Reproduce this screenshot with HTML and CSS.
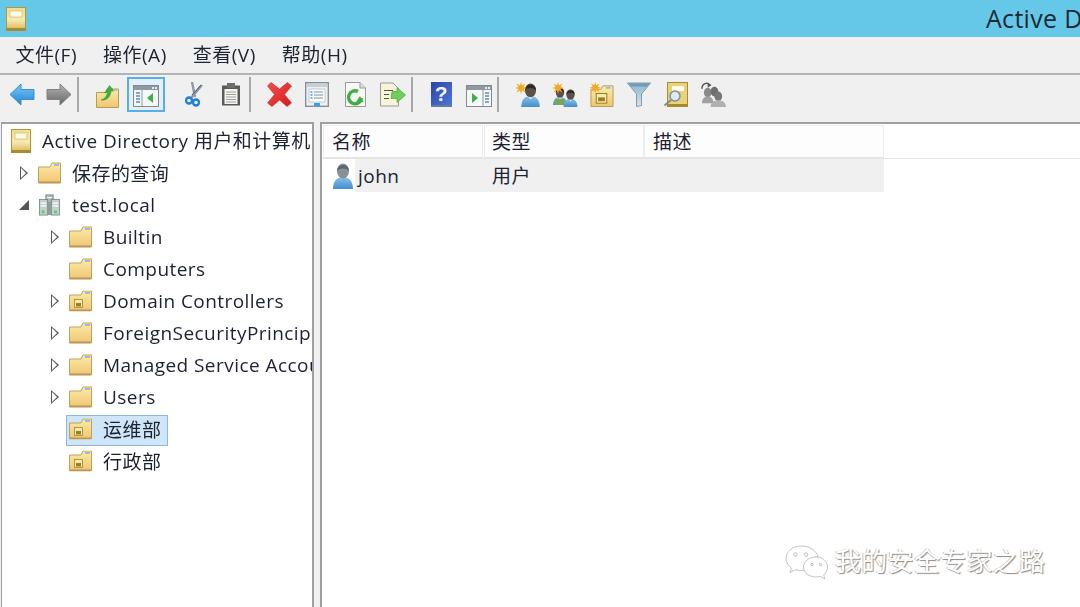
FILE: index.html
```html
<!DOCTYPE html>
<html lang="zh-CN">
<head>
<meta charset="utf-8">
<title>Active Directory 用户和计算机</title>
<link rel="stylesheet" href="styles.css">
</head>
<body>
<svg class="defs" width="0" height="0" aria-hidden="true">
  <defs>
    <linearGradient id="gFolder" x1="0" y1="0" x2="0" y2="1"><stop offset="0" stop-color="#fcebaa"/><stop offset="1" stop-color="#efc670"/></linearGradient>
    <linearGradient id="gBook" x1="0" y1="0" x2="0" y2="1"><stop offset="0" stop-color="#f0dd92"/><stop offset=".55" stop-color="#f6eab0"/><stop offset="1" stop-color="#d8b455"/></linearGradient>
    <linearGradient id="gBlue" x1="0" y1="0" x2="0" y2="1"><stop offset="0" stop-color="#7cc8f5"/><stop offset="1" stop-color="#1f86d6"/></linearGradient>
    <linearGradient id="gGray" x1="0" y1="0" x2="0" y2="1"><stop offset="0" stop-color="#b4b4b4"/><stop offset="1" stop-color="#666"/></linearGradient>
    <linearGradient id="gRed" x1="0" y1="0" x2="1" y2="1"><stop offset="0" stop-color="#f25050"/><stop offset="1" stop-color="#d81818"/></linearGradient>
    <linearGradient id="gHelp" x1="0" y1="0" x2="1" y2="1"><stop offset="0" stop-color="#2a45a5"/><stop offset="1" stop-color="#4e78dc"/></linearGradient>
    <linearGradient id="gFunnel" x1="0" y1="0" x2="0" y2="1"><stop offset="0" stop-color="#8fb4cc"/><stop offset="1" stop-color="#d4e4ee"/></linearGradient>
    <linearGradient id="gBody" x1="0" y1="0" x2="0" y2="1"><stop offset="0" stop-color="#8cc0e6"/><stop offset="1" stop-color="#3f8fd2"/></linearGradient>

    <symbol id="book" viewBox="0 0 20 24"><rect x=".5" y=".5" width="19" height="23" fill="url(#gBook)" stroke="#b4953c"/><rect x="0" y="21" width="20" height="3" fill="#a98a2e"/><rect x="4" y="4" width="12" height="6" fill="#fffbe6" stroke="#c9ae5a" stroke-width=".6"/></symbol>

    <symbol id="folder" viewBox="0 0 23 21"><path d="M.5 4.500H12L14 .5H22.500V20.500H.5Z" fill="url(#gFolder)" stroke="#c0a25e"/><rect x="16" y="1.500" width="5" height="2" fill="#8fc0e0"/><rect x="1" y="19" width="21" height="1.600" fill="#b8985a"/></symbol>

    <symbol id="folderou" viewBox="0 0 23 21"><use href="#folder" width="23" height="21"/><rect x="5.500" y="9" width="8" height="8" fill="#f6e9b2" stroke="#a5862a" stroke-width=".8"/><rect x="7" y="12.500" width="5" height="3.500" fill="#9a7c22"/></symbol>

    <symbol id="server" viewBox="0 0 24 24"><rect x="8" y="1" width="8" height="8" fill="#aab8b8" stroke="#707c7c" stroke-width=".8"/><rect x="1" y="6" width="9" height="17" fill="#c4d0d0" stroke="#6c7a7a" stroke-width=".8"/><rect x="14" y="6" width="9" height="17" fill="#c4d0d0" stroke="#6c7a7a" stroke-width=".8"/><path d="M10 9h4v14h-4z" fill="#8f9c9c"/><path d="M2.500 10h6M2.500 13h6M15.500 10h6M15.500 13h6M9.500 4h5" stroke="#fff" stroke-width="1.200"/><rect x="3.500" y="18" width="3" height="3" fill="#58d838"/><rect x="17" y="18" width="3" height="3" fill="#58d838"/></symbol>

    <symbol id="arrowl" viewBox="0 0 26 24"><path d="M1 12 12 1.500V7H25V17H12V22.500Z" fill="url(#gBlue)" stroke="#3a8fd0"/></symbol>
    <symbol id="arrowr" viewBox="0 0 26 24"><path d="M25 12 14 1.500V7H1V17H14V22.500Z" fill="url(#gGray)" stroke="#808080"/></symbol>

    <symbol id="up" viewBox="0 0 23 23"><path d="M.5 7.500H10L11 4H22.500V22.500H.5Z" fill="url(#gFolder)" stroke="#b79a5c"/><path d="M5 15C9 14 11 11 11.500 7L8.500 8 13.500 .5 18 6 15 6C15 11 11 16 5 15Z" fill="#3fae3c" stroke="#2f8f2d" stroke-width=".5"/><rect x="17" y="4.500" width="4" height="1.500" fill="#8fc0e0"/></symbol>

    <symbol id="tree" viewBox="0 0 26 22"><rect x=".5" y=".5" width="25" height="21" fill="#f5f7f8" stroke="#7f8a93"/><rect x="1" y="1" width="24" height="4" fill="#8f99a2"/><rect x="19" y="2" width="2" height="2" fill="#e8ecef"/><rect x="22" y="2" width="2" height="2" fill="#e8ecef"/><path d="M9 5V21" stroke="#8f99a2"/><path d="M3 8h4M3 11h4M3 14h4M3 17h4" stroke="#5a8fc0" stroke-width="1.500"/><path d="M20 8V18L14 13Z" fill="#3cb043"/></symbol>

    <symbol id="scissors" viewBox="0 0 18 25"><path d="M7 0 10 15M17 3 6 16" stroke="#8d99a6" stroke-width="2.400" fill="none"/><path d="M16 3 7 13" stroke="#4a5562" stroke-width="1"/><circle cx="4" cy="18.500" r="3" fill="none" stroke="#1f7fd8" stroke-width="2.400"/><circle cx="11" cy="20.500" r="3" fill="none" stroke="#1f7fd8" stroke-width="2.400"/></symbol>

    <symbol id="clip" viewBox="0 0 20 23"><rect x="1" y="2.500" width="18" height="20" fill="#5a5a5a"/><rect x="3.500" y="6" width="13" height="15" fill="#f4f4f0"/><path d="M5 9h10M5 11.500h10M5 14h10M5 16.500h10M5 19h10" stroke="#a0a0a0"/><rect x="6" y="0" width="8" height="5" fill="#6c6c6c"/></symbol>

    <symbol id="del" viewBox="0 0 25 25"><path d="M4 .5 12.500 7 20.500 .5 24.500 4 17.500 12.500 24.500 21 20 24.500 12.500 18 5 24.500 .5 21 7.500 12.500 .5 4Z" fill="url(#gRed)" stroke="#c43838" stroke-width=".7"/></symbol>

    <symbol id="props" viewBox="0 0 24 25"><rect x=".7" y=".7" width="22.600" height="23.600" fill="#eef2f4" stroke="#858f96" stroke-width="1.400"/><rect x="2" y="2" width="20" height="3" fill="#c8d0d6"/><rect x="4" y="7" width="16" height="13" fill="#fff" stroke="#aeb6bc" stroke-width=".7"/><path d="M9 10h9M9 13h9M9 16h9" stroke="#7f8a93"/><path d="M5.500 10h2M5.500 13h2M5.500 16h2" stroke="#39a0e8" stroke-width="1.300"/><rect x="9" y="21" width="6" height="3" fill="#39a0e8"/></symbol>

    <symbol id="refresh" viewBox="0 0 21 25"><path d="M.5.5H15L20.500 6V24.500H.5Z" fill="#f8f8f4" stroke="#9a9a9a"/><path d="M15 .5V6H20.500" fill="#ddd" stroke="#9a9a9a"/><path d="M16.500 16A6.500 6.500 0 1 1 13 9.500" fill="none" stroke="#3cb043" stroke-width="3.400"/><path d="M11 20 18.500 20 15 14Z" fill="#3cb043"/></symbol>

    <symbol id="export" viewBox="0 0 26 24"><path d="M.5.5H13L18.500 6V23.500H.5Z" fill="#f8f4d8" stroke="#9a9a9a"/><path d="M4 8h9M4 12h5M4 16h5" stroke="#555" stroke-width="1.200"/><path d="M12 9H17V5L25.500 12.500 17 20V16H11Z" fill="#6fcf5a" stroke="#4fa83e" stroke-width=".7"/></symbol>

    <symbol id="help" viewBox="0 0 21 25"><rect width="21" height="25" fill="url(#gHelp)"/><rect y="23" width="21" height="2" fill="#6b7a96"/><text x="10.500" y="19" font-family="'Liberation Sans',sans-serif" font-size="21" font-weight="700" fill="#f0f4ff" text-anchor="middle">?</text></symbol>

    <symbol id="pane" viewBox="0 0 26 22"><rect x=".5" y=".5" width="25" height="21" fill="#f5f7f8" stroke="#7f8a93"/><rect x="1" y="1" width="24" height="4" fill="#8f99a2"/><rect x="19" y="2" width="2" height="2" fill="#e8ecef"/><rect x="22" y="2" width="2" height="2" fill="#e8ecef"/><path d="M17 5V21" stroke="#8f99a2"/><path d="M19 8h4M19 11h4M19 14h4M19 17h4" stroke="#5a8fc0" stroke-width="1.500"/><path d="M6 8V18L12 13Z" fill="#3cb043"/></symbol>

    <g id="star"><path d="M6 0 7 3.500 10.500 1.500 8.500 5 12 6 8.500 7 10.500 10.500 7 8.500 6 12 5 8.500 1.500 10.500 3.500 7 0 6 3.500 5 1.500 1.500 5 3.500Z" fill="#f6a821"/></g>

    <symbol id="person" viewBox="0 0 20 26"><path d="M0 26C0 18 4 14 10 14S20 18 20 26Z" fill="url(#gBody)"/><path d="M7 14.500 10 18 13 14.500Z" fill="#d6e8f5"/><ellipse cx="10" cy="8" rx="6" ry="7.500" fill="#5c5148"/><path d="M4 8C4 0 16 0 16 8 13 4.500 7 4.500 4 8Z" fill="#2e2823"/></symbol>

    <symbol id="personb" viewBox="0 0 20 26"><path d="M0 26C0 18 4 14 10 14S20 18 20 26Z" fill="url(#gBody)"/><ellipse cx="10" cy="8" rx="6" ry="7.500" fill="#8a9096"/><path d="M4 8C4 0 16 0 16 8 13 4.500 7 4.500 4 8Z" fill="#5a6873"/></symbol>

    <symbol id="newuser" viewBox="0 0 25 25"><use href="#person" x="6" y="1" width="19" height="24"/><use href="#star"/></symbol>

    <symbol id="newgroup" viewBox="0 0 26 25"><use href="#person" x="1" y="5" width="14" height="18"/><rect x="3" y="17" width="10" height="6" fill="#7aa850"/><use href="#person" x="11" y="7" width="15" height="18"/><use href="#star"/></symbol>

    <symbol id="newou" viewBox="0 0 25 26"><path d="M1.500 7.500H12L14 4H24.500V25.500H1.500Z" fill="url(#gFolder)" stroke="#b79a5c"/><rect x="17" y="5" width="5" height="2" fill="#8fc0e0"/><rect x="7" y="12" width="11" height="10" fill="#f6e9b2" stroke="#97781f"/><rect x="9" y="16" width="7" height="4" fill="#9a7c22"/><use href="#star"/></symbol>

    <symbol id="filter" viewBox="0 0 24 25"><path d="M.5 1H23.500L14.500 12V23.500L9.500 24.500V12Z" fill="url(#gFunnel)" stroke="#7f9cb0"/><path d="M1.500 1.500H22.500L20 4.500H4Z" fill="#6f9cb8"/></symbol>

    <symbol id="find" viewBox="0 0 25 25"><rect x="4.500" y=".5" width="20" height="24" fill="#e8d27a" stroke="#a88c2c"/><rect x="5" y="22" width="19" height="2.500" fill="#a88c2c"/><rect x="9" y="4" width="12" height="5" fill="#fffbe6"/><circle cx="12" cy="14" r="5" fill="#dbeaf3" stroke="#7f8f98" stroke-width="1.500"/><path d="M8 18 1.500 23.500" stroke="#8a8a8a" stroke-width="2.200"/></symbol>

    <symbol id="delegate" viewBox="0 0 27 26"><path d="M2 7C2 1 8 0 10 3" fill="none" stroke="#555" stroke-width="1.500"/><path d="M8 1 12 3 8 6Z" fill="#555"/><ellipse cx="8" cy="11" rx="4" ry="5" fill="#8a8a8a"/><path d="M2 22C2 17 5 15 8 15S14 17 14 22Z" fill="#a0a0a0"/><ellipse cx="15" cy="10" rx="4" ry="5" fill="#6e6e6e"/><ellipse cx="19" cy="15" rx="4" ry="5" fill="#777"/><path d="M11 26C11 21 15 19 19 19S27 21 27 26Z" fill="#b0b0b0"/></symbol>

    <symbol id="wechat" viewBox="0 0 43 35"><path d="M16 1C7.500 1 1 6.500 1 13.500 1 17.500 3.500 21 6.500 23L5 27.500 10.500 24.700C12 25.200 14 25.500 16 25.500 17 25.500 18 25.400 19 25.200 18.200 19 25 12 33 12 31.500 5.500 24.500 1 16 1Z" fill="#fff" stroke="#c4c4c4"/><path d="M31 12C24 12 18.500 16.500 18.500 22 18.500 27.500 24 32 31 32 32.500 32 34 31.800 35.200 31.400L40 34 38.700 30C40.800 28.200 42.500 25.300 42.500 22 42.500 16.500 38 12 31 12Z" fill="#fff" stroke="#c4c4c4"/><circle cx="10.500" cy="9.500" r="1.700" fill="none" stroke="#bbb"/><circle cx="21" cy="9.500" r="1.700" fill="none" stroke="#bbb"/><circle cx="27" cy="19.500" r="1.200" fill="none" stroke="#bbb"/><circle cx="35.500" cy="19.500" r="1.200" fill="none" stroke="#bbb"/></symbol>
  </defs>
</svg>

<div class="app">
  <header class="titlebar">
    <svg class="title-icon"><use href="#book"/></svg>
    <span class="title-text">Active Directory 用户和计算机</span>
  </header>

  <nav class="menubar">
    <span class="menu-item">文件(F)</span>
    <span class="menu-item">操作(A)</span>
    <span class="menu-item">查看(V)</span>
    <span class="menu-item">帮助(H)</span>
  </nav>

  <div class="toolbar">
    <span class="tool"><svg class="i26"><use href="#arrowl"/></svg></span>
    <span class="tool"><svg class="i26"><use href="#arrowr"/></svg></span>
    <span class="sep"></span>
    <span class="tool ml-10"><svg class="i23"><use href="#up"/></svg></span>
    <span class="tool active"><svg class="i26s"><use href="#tree"/></svg></span>
    <span class="tool ml-10"><svg class="i18"><use href="#scissors"/></svg></span>
    <span class="tool"><svg class="i20"><use href="#clip"/></svg></span>
    <span class="sep"></span>
    <span class="tool ml-10"><svg class="i25"><use href="#del"/></svg></span>
    <span class="tool"><svg class="i24"><use href="#props"/></svg></span>
    <span class="tool ml-2"><svg class="i21"><use href="#refresh"/></svg></span>
    <span class="tool"><svg class="i26"><use href="#export"/></svg></span>
    <span class="sep"></span>
    <span class="tool ml-10"><svg class="i21"><use href="#help"/></svg></span>
    <span class="tool"><svg class="i26s"><use href="#pane"/></svg></span>
    <span class="sep"></span>
    <span class="tool ml-10"><svg class="i25"><use href="#newuser"/></svg></span>
    <span class="tool"><svg class="i26"><use href="#newgroup"/></svg></span>
    <span class="tool"><svg class="i25"><use href="#newou"/></svg></span>
    <span class="tool"><svg class="i24"><use href="#filter"/></svg></span>
    <span class="tool"><svg class="i25"><use href="#find"/></svg></span>
    <span class="tool"><svg class="i26"><use href="#delegate"/></svg></span>
  </div>

  <main class="panes">
    <section class="tree-pane">
      <div class="row root"><svg class="ic-book"><use href="#book"/></svg><span class="label">Active Directory 用户和计算机</span></div>
      <div class="row l1"><span class="twist closed"></span><span class="node"><svg class="ic"><use href="#folder"/></svg><span class="label cjk">保存的查询</span></span></div>
      <div class="row l1"><span class="twist open"></span><span class="node"><svg class="ic"><use href="#server"/></svg><span class="label">test.local</span></span></div>
      <div class="row l2"><span class="twist closed"></span><span class="node"><svg class="ic"><use href="#folder"/></svg><span class="label">Builtin</span></span></div>
      <div class="row l2"><span class="twist"></span><span class="node"><svg class="ic"><use href="#folder"/></svg><span class="label">Computers</span></span></div>
      <div class="row l2"><span class="twist closed"></span><span class="node"><svg class="ic"><use href="#folderou"/></svg><span class="label">Domain Controllers</span></span></div>
      <div class="row l2"><span class="twist closed"></span><span class="node"><svg class="ic"><use href="#folder"/></svg><span class="label">ForeignSecurityPrincipals</span></span></div>
      <div class="row l2"><span class="twist closed"></span><span class="node"><svg class="ic"><use href="#folder"/></svg><span class="label">Managed Service Accounts</span></span></div>
      <div class="row l2"><span class="twist closed"></span><span class="node"><svg class="ic"><use href="#folder"/></svg><span class="label">Users</span></span></div>
      <div class="row l2"><span class="twist"></span><span class="node selected"><svg class="ic"><use href="#folderou"/></svg><span class="label cjk">运维部</span></span></div>
      <div class="row l2"><span class="twist"></span><span class="node"><svg class="ic"><use href="#folderou"/></svg><span class="label cjk">行政部</span></span></div>
    </section>

    <section class="list-pane">
      <div class="list-head">
        <span class="col col-name">名称</span>
        <span class="col col-type">类型</span>
        <span class="col col-desc">描述</span>
      </div>
      <div class="list-row">
        <span class="cell-icon"><svg class="ic-user"><use href="#personb"/></svg></span>
        <span class="cell cell-name">john</span>
        <span class="cell cell-type">用户</span>
        <span class="cell cell-desc"></span>
      </div>
    </section>
  </main>

  <div class="watermark">
    <svg class="wm-icon"><use href="#wechat"/></svg>
    <span class="wm-text">我的安全专家之路</span>
  </div>
</div>
</body>
</html>
```

FILE: styles.css
```css
* { box-sizing: border-box; }
html, body { margin: 0; padding: 0; }
body {
  width: 1080px;
  height: 607px;
  overflow: hidden;
  background: #f0f0f0;
  color: #1c2230;
  font-family: "Open Sans", "Noto Sans CJK SC", sans-serif;
  font-size: 19px;
  letter-spacing: .45px;
}
.defs { position: absolute; }
.app {
  position: relative;
  display: flex;
  flex-direction: column;
  width: 1080px;
  height: 607px;
  overflow: hidden;
  filter: blur(.45px);
}

.titlebar {
  display: flex;
  align-items: center;
  flex: none;
  height: 37px;
  background: #65c8e9;
  padding-left: 6px;
  overflow: hidden;
  white-space: nowrap;
}
.title-icon { width: 20px; height: 24px; flex: none; }
.title-text {
  flex: none;
  margin-left: 960px;
  margin-bottom: 4px;
  font-size: 25px;
  letter-spacing: .3px;
  color: #1c2a33;
}

.menubar {
  display: flex;
  align-items: center;
  flex: none;
  height: 38px;
  padding-left: 15.5px;
  gap: 26px;
  border-bottom: 2px solid #b4b4b4;
}
.menu-item { font-size: 19px; letter-spacing: .5px; line-height: 24px; }

.toolbar {
  display: flex;
  align-items: center;
  flex: none;
  height: 47px;
  padding: 2px 0 10px 3px;
}
.tool {
  display: flex;
  align-items: center;
  justify-content: center;
  width: 37px;
  height: 35px;
  flex: none;
}
.tool.active {
  width: 38px;
  margin-left: 1px;
  background: #e3f0fb;
  border: 2px solid #5aaee6;
}
.sep { width: 2px; height: 35px; background: #a8a8a8; flex: none; }
.ml-10 { margin-left: 10px; }
.ml-2 { margin-left: 2px; }

.i26 { width: 26px; height: 25px; }
.i26s { width: 26px; height: 22px; margin-top: 3px; }
.i25 { width: 25px; height: 25px; }
.i24 { width: 24px; height: 25px; }
.i23 { width: 23px; height: 23px; margin-top: 3px; }
.i21 { width: 21px; height: 25px; }
.i20 { width: 20px; height: 23px; }
.i18 { width: 18px; height: 25px; }

.panes {
  display: flex;
  flex: 1;
  min-height: 0;
  padding-left: 1px;
  gap: 6px;
}
.tree-pane {
  flex: none;
  width: 313px;
  padding-top: 1px;
  background: #fff;
  border: 1px solid #a0a0a0;
  border-top-width: 2px;
  border-right-width: 2px;
  border-bottom: 0;
  overflow: hidden;
}
.row {
  display: flex;
  align-items: center;
  height: 32px;
  white-space: nowrap;
}
.root { padding-left: 9px; }
.l1 { padding-left: 16px; }
.l2 { padding-left: 47px; }
.ic-book { width: 20px; height: 24px; margin-right: 11px; flex: none; }
.twist {
  position: relative;
  flex: none;
  width: 20px;
  height: 14px;
}
.twist.closed::before {
  content: "";
  position: absolute;
  left: 2px;
  top: 0;
  border-style: solid;
  border-width: 7px 0 7px 8px;
  border-color: transparent transparent transparent #5a5a5a;
}
.twist.closed::after {
  content: "";
  position: absolute;
  left: 3px;
  top: 2px;
  border-style: solid;
  border-width: 5px 0 5px 5px;
  border-color: transparent transparent transparent #fff;
}
.twist.open::before {
  content: "";
  position: absolute;
  left: 1px;
  top: 2px;
  border-style: solid;
  border-width: 0 0 10px 10px;
  border-color: transparent transparent #555 transparent;
}
.node {
  position: relative;
  z-index: 0;
  display: flex;
  align-items: center;
  flex: none;
  height: 32px;
  margin-left: -3px;
  padding: 0 2px;
  border: 1px solid transparent;
}
.node.selected { border: 0; padding: 0 7px 0 3px; }
.node.selected::before {
  content: "";
  position: absolute;
  z-index: -1;
  inset: 2px 0 -1px 0;
  background: #cfe5f9;
  border: 1px solid #8fb8e0;
}
.ic { width: 23px; height: 22px; margin-right: 11px; flex: none; }
.label { font-size: 19px; line-height: 24px; }
.label.cjk { margin-top: 2px; }

.list-pane {
  flex: 1;
  min-width: 0;
  background: #fff;
  border-top: 2px solid #a0a0a0;
  border-left: 2px solid #a0a0a0;
}
.list-head {
  display: flex;
  height: 35px;
  padding-top: 1px;
  border-bottom: 1px solid #e4e4e4;
}
.col {
  flex: none;
  display: flex;
  align-items: center;
  height: 33px;
  padding-bottom: 1px;
  background: #fdfdfd;
  border: 1px solid #ececec;
  border-bottom-color: #e4e4e4;
}
.col-name { width: 160px; margin-left: 1px; padding-left: 8px; }
.col-type { width: 160px; margin-left: 1px; padding-left: 7px; }
.col-desc { width: 240px; padding-left: 8px; }
.list-row {
  display: flex;
  align-items: center;
  height: 33px;
}
.cell-icon {
  display: flex;
  flex: none;
  width: 33px;
  height: 33px;
  padding-left: 11px;
  align-items: center;
  background: #fff;
}
.ic-user { width: 20px; height: 26px; }
.cell { display: flex; align-items: center; height: 33px; background: #f0f0f0; flex: none; }
.cell-name { width: 130px; padding-left: 3px; }
.cell-type { width: 160px; padding-left: 7px; padding-bottom: 1px; }
.cell-desc { width: 239px; }

.watermark {
  position: absolute;
  left: 785px;
  top: 542px;
  display: flex;
  align-items: center;
  gap: 7px;
}
.wm-icon { width: 43px; height: 35px; flex: none; }
.wm-text {
  margin-bottom: 5px;
  font-family: "Noto Sans CJK SC", sans-serif;
  font-size: 26px;
  letter-spacing: .3px;
  line-height: 35px;
  color: #fff;
  text-shadow: 1px 1px 1px #8a8a8a, -1px 0 0 #c8c8c8;
}
```
